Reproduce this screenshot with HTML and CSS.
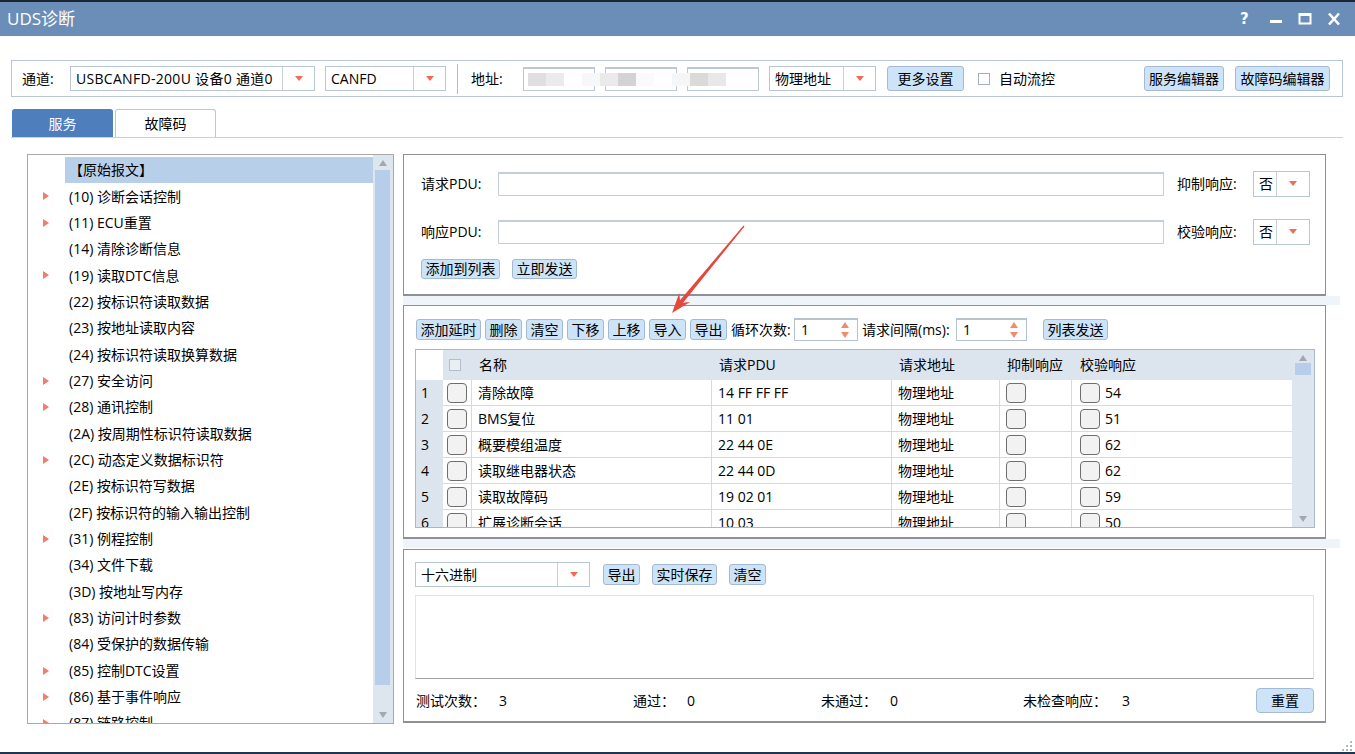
FILE: index.html
```html
<!DOCTYPE html>
<html lang="zh-CN">
<head>
  <meta charset="UTF-8">
  <title>UDS诊断</title>
  <link rel="stylesheet" href="styles.css">
</head>
<body>
<div class="window">
  <!-- title bar -->
  <div class="titlebar">
    <span class="title">UDS诊断</span>
    <div class="title-btns">
      <span class="help">?</span>
      <svg width="14" height="14" viewBox="0 0 14 14"><rect x="1" y="8" width="12" height="3" fill="#fff"/></svg>
      <svg width="14" height="14" viewBox="0 0 14 14"><rect x="1.5" y="2" width="11" height="9.5" fill="none" stroke="#fff" stroke-width="2"/><rect x="1" y="1" width="12" height="3" fill="#fff"/></svg>
      <svg width="14" height="14" viewBox="0 0 14 14"><path d="M2 1.5 L12 12.5 M12 1.5 L2 12.5" stroke="#fff" stroke-width="2.6"/></svg>
    </div>
  </div>

  <div class="content">
    <!-- channel toolbar -->
    <div class="toolbar">
      <span class="lbl lbl-ch">通道:</span>
      <div class="combo combo-ch"><span class="combo-text">USBCANFD-200U 设备0 通道0</span><span class="combo-arrow"></span></div>
      <div class="combo combo-type"><span class="combo-text">CANFD</span><span class="combo-arrow"></span></div>
      <span class="vsep"></span>
      <span class="lbl lbl-addr">地址:</span>
      <span class="addr"></span>
      <span class="addr"></span>
      <span class="addr"></span>
      <div class="combo combo-addr"><span class="combo-text">物理地址</span><span class="combo-arrow"></span></div>
      <button class="btn btn-tb btn-more">更多设置</button>
      <span class="check-sm"></span>
      <span class="lbl lbl-flow">自动流控</span>
      <button class="btn btn-tb btn-svc">服务编辑器</button>
      <button class="btn btn-tb btn-dtc">故障码编辑器</button>
      <div class="mosaic">
        <i style="background:#dfdfdf"></i><i style="background:#ebebeb"></i><i></i><i style="background:#f7f7f8"></i><i style="background:#eaeaea"></i><i style="background:#d3d3d4"></i><i style="background:#fafafa"></i><i></i><i style="background:#f6f6f7"></i><i style="background:#dcdad9"></i><i style="background:#e8e8e8"></i>
      </div>
    </div>

    <!-- tabs -->
    <div class="tabs">
      <div class="tab active">服务</div>
      <div class="tab">故障码</div>
    </div>

    <div class="main">
      <!-- service tree -->
      <div class="tree">
        <ul class="tree-list">
          <li class="sel"><span class="node-text">【原始报文】</span></li>
          <li class="has"><span class="node-text">(10) 诊断会话控制</span></li>
          <li class="has"><span class="node-text">(11) ECU重置</span></li>
          <li><span class="node-text">(14) 清除诊断信息</span></li>
          <li class="has"><span class="node-text">(19) 读取DTC信息</span></li>
          <li><span class="node-text">(22) 按标识符读取数据</span></li>
          <li><span class="node-text">(23) 按地址读取内容</span></li>
          <li><span class="node-text">(24) 按标识符读取换算数据</span></li>
          <li class="has"><span class="node-text">(27) 安全访问</span></li>
          <li class="has"><span class="node-text">(28) 通讯控制</span></li>
          <li><span class="node-text">(2A) 按周期性标识符读取数据</span></li>
          <li class="has"><span class="node-text">(2C) 动态定义数据标识符</span></li>
          <li><span class="node-text">(2E) 按标识符写数据</span></li>
          <li><span class="node-text">(2F) 按标识符的输入输出控制</span></li>
          <li class="has"><span class="node-text">(31) 例程控制</span></li>
          <li><span class="node-text">(34) 文件下载</span></li>
          <li><span class="node-text">(3D) 按地址写内存</span></li>
          <li class="has"><span class="node-text">(83) 访问计时参数</span></li>
          <li><span class="node-text">(84) 受保护的数据传输</span></li>
          <li class="has"><span class="node-text">(85) 控制DTC设置</span></li>
          <li class="has"><span class="node-text">(86) 基于事件响应</span></li>
          <li class="has"><span class="node-text">(87) 链路控制</span></li>
        </ul>
        <div class="vscroll tree-scroll">
          <span class="sb-up"></span>
          <span class="sb-thumb"></span>
          <span class="sb-down"></span>
        </div>
      </div>

      <div class="right">
        <!-- single request -->
        <div class="panel panel-req">
          <div class="pdu-row">
            <span class="lbl lbl-pdu">请求PDU:</span>
            <span class="pdu-input"></span>
            <span class="lbl lbl-opt">抑制响应:</span>
            <div class="combo combo-yn"><span class="combo-text">否</span><span class="combo-arrow"></span></div>
          </div>
          <div class="pdu-row row2">
            <span class="lbl lbl-pdu">响应PDU:</span>
            <span class="pdu-input"></span>
            <span class="lbl lbl-opt">校验响应:</span>
            <div class="combo combo-yn"><span class="combo-text">否</span><span class="combo-arrow"></span></div>
          </div>
          <div class="btn-row">
            <button class="btn">添加到列表</button>
            <button class="btn">立即发送</button>
          </div>
        </div>

        <div class="splitter"></div>

        <!-- request list -->
        <div class="panel panel-list">
          <div class="list-bar">
            <button class="btn">添加延时</button>
            <button class="btn">删除</button>
            <button class="btn">清空</button>
            <button class="btn">下移</button>
            <button class="btn">上移</button>
            <button class="btn">导入</button>
            <button class="btn">导出</button>
            <span class="lbl lbl-loop">循环次数:</span>
            <div class="spin spin-loop"><span>1</span><i class="spin-arrows"></i></div>
            <span class="lbl lbl-gap">请求间隔(ms):</span>
            <div class="spin spin-gap"><span>1</span><i class="spin-arrows"></i></div>
            <button class="btn btn-send">列表发送</button>
          </div>

          <div class="grid">
            <div class="grid-body">
              <div class="grow ghead">
                <span class="c-num"></span>
                <span class="c-chk"><i class="hchk"></i></span>
                <span class="c-name">名称</span>
                <span class="c-pdu">请求PDU</span>
                <span class="c-addr">请求地址</span>
                <span class="c-sup">抑制响应</span>
                <span class="c-ver">校验响应</span>
              </div>
              <div class="grow">
                <span class="c-num">1</span><span class="c-chk"><i class="cbox"></i></span><span class="c-name">清除故障</span><span class="c-pdu">14 FF FF FF</span><span class="c-addr">物理地址</span><span class="c-sup"><i class="cbox"></i></span><span class="c-ver"><i class="cbox"></i>54</span>
              </div>
              <div class="grow">
                <span class="c-num">2</span><span class="c-chk"><i class="cbox"></i></span><span class="c-name">BMS复位</span><span class="c-pdu">11 01</span><span class="c-addr">物理地址</span><span class="c-sup"><i class="cbox"></i></span><span class="c-ver"><i class="cbox"></i>51</span>
              </div>
              <div class="grow">
                <span class="c-num">3</span><span class="c-chk"><i class="cbox"></i></span><span class="c-name">概要模组温度</span><span class="c-pdu">22 44 0E</span><span class="c-addr">物理地址</span><span class="c-sup"><i class="cbox"></i></span><span class="c-ver"><i class="cbox"></i>62</span>
              </div>
              <div class="grow">
                <span class="c-num">4</span><span class="c-chk"><i class="cbox"></i></span><span class="c-name">读取继电器状态</span><span class="c-pdu">22 44 0D</span><span class="c-addr">物理地址</span><span class="c-sup"><i class="cbox"></i></span><span class="c-ver"><i class="cbox"></i>62</span>
              </div>
              <div class="grow">
                <span class="c-num">5</span><span class="c-chk"><i class="cbox"></i></span><span class="c-name">读取故障码</span><span class="c-pdu">19 02 01</span><span class="c-addr">物理地址</span><span class="c-sup"><i class="cbox"></i></span><span class="c-ver"><i class="cbox"></i>59</span>
              </div>
              <div class="grow">
                <span class="c-num">6</span><span class="c-chk"><i class="cbox"></i></span><span class="c-name">扩展诊断会话</span><span class="c-pdu">10 03</span><span class="c-addr">物理地址</span><span class="c-sup"><i class="cbox"></i></span><span class="c-ver"><i class="cbox"></i>50</span>
              </div>
            </div>
            <div class="vscroll grid-scroll">
              <span class="sb-up"></span>
              <span class="sb-thumb"></span>
              <span class="sb-down"></span>
            </div>
          </div>
        </div>

        <div class="splitter"></div>

        <!-- result log -->
        <div class="panel panel-log">
          <div class="log-bar">
            <div class="combo combo-fmt"><span class="combo-text">十六进制</span><span class="combo-arrow"></span></div>
            <button class="btn">导出</button>
            <button class="btn">实时保存</button>
            <button class="btn">清空</button>
          </div>
          <div class="log"></div>
          <div class="stats">
            <span>测试次数：</span><span>3</span>
            <span>通过：</span><span>0</span>
            <span>未通过：</span><span>0</span>
            <span>未检查响应：</span><span>3</span>
            <button class="btn btn-reset">重置</button>
          </div>
        </div>
      </div>
    </div>
  </div>

  <!-- annotation arrow drawn over the screenshot -->
  <svg class="mark" width="1355" height="754" viewBox="0 0 1355 754">
    <polygon fill="#e5483b" points="744.5,226.4 683.1,302.7 690.1,302.1 672,313 679.3,293.1 680.0,300.2 743.5,225.6"/>
  </svg>
  <span class="grip"></span>
</div>
</body>
</html>
```

FILE: styles.css
```css
* {
  box-sizing: border-box;
}
body {
  margin: 0;
  font-family: "Open Sans", "Noto Sans CJK SC", sans-serif;
  font-size: 14px;
  line-height: 18px;
  color: #000;
  background: #fff;
}
ul {
  margin: 0;
  padding: 0;
  list-style: none;
}
i {
  display: block;
}
.window {
  position: relative;
  width: 1355px;
  height: 754px;
  border-top: 2px solid #1c2633;
  border-bottom: 2px solid #1d3550;
  background: #fff;
  overflow: hidden;
  display: flex;
  flex-direction: column;
}

/* title bar */
.titlebar {
  height: 34px;
  flex: none;
  background: #6a8eb8;
  color: #fff;
  display: flex;
  align-items: center;
  padding-left: 7px;
}
.title {
  font-size: 17px;
  line-height: 22px;
}
.title-btns {
  margin-left: auto;
  display: flex;
  align-items: center;
  gap: 15px;
  padding-right: 14px;
}
.help {
  font-family: "DejaVu Sans", sans-serif;
  font-weight: bold;
  font-size: 15px;
  width: 10px;
  margin-right: 4px;
}

.content {
  flex: 1;
  padding: 24px 12px 0 11px;
}

/* top toolbar */
.toolbar {
  position: relative;
  height: 37px;
  border: 1px solid #b9c6d5;
  display: flex;
  align-items: center;
  padding: 0 12px 0 10px;
}
.lbl {
  white-space: nowrap;
  flex: none;
}
.lbl-ch {
  width: 48px;
}
.lbl-addr {
  width: 52px;
  margin-left: 13px;
}
.vsep {
  width: 1px;
  height: 30px;
  background: #b3bcc8;
  margin-left: 11px;
}
.addr {
  width: 72px;
  height: 24px;
  border: 1px solid #bcc8d6;
  border-top-width: 2px;
  margin-right: 10px;
}
.mosaic {
  position: absolute;
  left: 516px;
  top: 12px;
  display: flex;
}
.mosaic i {
  width: 18px;
  height: 13px;
}

.combo {
  display: flex;
  height: 25px;
  border: 1px solid #b9c6d5;
  background: #fff;
  flex: none;
}
.combo-text {
  flex: 1;
  padding-left: 5px;
  line-height: 23px;
  white-space: nowrap;
  overflow: hidden;
}
.combo-ch .combo-text {
  letter-spacing: 0.3px;
}
.combo-arrow {
  width: 32px;
  border-left: 1px solid #c7d1dc;
  position: relative;
}
.combo-arrow::after {
  content: "";
  position: absolute;
  left: 12px;
  top: 9px;
  border-left: 4px solid transparent;
  border-right: 4px solid transparent;
  border-top: 5px solid #f26b53;
}
.combo-ch {
  width: 245px;
}
.combo-type {
  width: 121px;
  margin-left: 10px;
}
.combo-addr {
  width: 107px;
}
.combo-yn {
  width: 57px;
  height: 26px;
}
.combo-yn .combo-arrow {
  width: 33px;
}
.combo-fmt {
  width: 175px;
}

.btn {
  font: inherit;
  color: #000;
  height: 21px;
  line-height: 18px;
  padding: 0 3.5px;
  background: #cde4f8;
  border: 1px solid #a4bad3;
  border-radius: 3px;
  flex: none;
  white-space: nowrap;
}
.btn-tb {
  height: 25px;
  padding: 0 4px;
}
.btn-more {
  width: 77px;
  margin-left: 11px;
}
.btn-svc {
  margin-left: auto;
  width: 80px;
}
.btn-dtc {
  margin-left: 11px;
  width: 95px;
}
.check-sm {
  width: 12px;
  height: 12px;
  border: 1px solid #a3afbe;
  margin-left: 14px;
  flex: none;
}
.lbl-flow {
  margin-left: 9px;
}

/* tabs */
.tabs {
  margin-top: 12px;
  height: 29px;
  display: flex;
  gap: 2px;
  padding-left: 1px;
  border-bottom: 1px solid #c5d3e2;
}
.tab {
  width: 101px;
  height: 28px;
  display: flex;
  align-items: center;
  justify-content: center;
  border: 1px solid #b9c7d6;
  border-bottom: none;
  border-radius: 3px 3px 0 0;
  background: #fff;
}
.tab.active {
  background: #4f7ebd;
  border-color: #4f7ebd;
  color: #fff;
}

/* main area */
.main {
  display: flex;
  padding: 16px 0 0 16px;
}
.tree {
  width: 367px;
  height: 570px;
  border: 1px solid #a9a9a9;
  display: flex;
  flex: none;
  overflow: hidden;
}
.tree-list {
  flex: 1;
  padding-top: 2px;
}
.tree-list li {
  height: 26.35px;
  display: flex;
  align-items: center;
  padding-left: 37px;
  position: relative;
}
.tree-list li.has::before {
  content: "";
  position: absolute;
  left: 15px;
  top: 9px;
  border-top: 4px solid transparent;
  border-bottom: 4px solid transparent;
  border-left: 6px solid #f47c6a;
}
.node-text {
  padding-left: 4px;
  white-space: nowrap;
}
.tree-list li.sel .node-text {
  background: #b8cfea;
  width: 100%;
  height: 26px;
  line-height: 26px;
}

.vscroll {
  background: #dde5ee;
  position: relative;
  flex: none;
}
.tree-scroll {
  width: 20px;
}
.sb-up, .sb-down {
  position: absolute;
  left: 50%;
  margin-left: -4px;
  border-left: 4px solid transparent;
  border-right: 4px solid transparent;
}
.sb-up {
  top: 5px;
  border-bottom: 6px solid #a3a8ae;
}
.sb-down {
  bottom: 5px;
  border-top: 6px solid #a3a8ae;
}
.sb-thumb {
  position: absolute;
  background: #b7cdea;
}
.tree-scroll .sb-thumb {
  left: 2px;
  right: 3px;
  top: 15px;
  height: 515px;
}

.right {
  width: 937px;
  margin-left: 9px;
  flex: none;
}
.splitter {
  height: 9px;
  background: #eef4f9;
}
.splitter + .panel-log {
  margin-top: 1px;
}
.panel {
  width: 923px;
  border: 1px solid #8d9196;
  border-bottom-width: 2px;
  background: #fff;
}

/* request panel */
.panel-req {
  height: 142px;
  padding: 16px 15px 0 17px;
}
.pdu-row {
  display: flex;
  align-items: center;
  height: 26px;
}
.row2 {
  margin-top: 22px;
}
.lbl-pdu {
  width: 77px;
}
.pdu-input {
  flex: 1;
  height: 24px;
  border: 1px solid #c3cedb;
  border-top-width: 2px;
}
.lbl-opt {
  width: 76px;
  margin-left: 13px;
}
.btn-row {
  display: flex;
  gap: 12px;
  margin-top: 14px;
}
.btn-row .btn {
  height: 20px;
}

/* list panel */
.panel-list {
  height: 234px;
  padding: 12px 10px 0 11px;
}
.list-bar {
  display: flex;
  align-items: center;
  height: 23px;
  gap: 4px;
  padding-left: 1px;
}
.spin {
  height: 23px;
  border: 1px solid #b4c2d2;
  border-top-width: 2px;
  position: relative;
  padding-left: 6px;
  line-height: 19px;
  flex: none;
}
.spin-loop {
  width: 64px;
}
.spin-gap {
  width: 71px;
}
.lbl-loop {
  width: 59px;
}
.lbl-gap {
  width: 90px;
}
.spin-arrows {
  position: absolute;
  right: 8px;
  top: 2px;
  width: 8px;
  height: 16px;
}
.spin-arrows::before, .spin-arrows::after {
  content: "";
  position: absolute;
  left: 0;
  border-left: 4px solid transparent;
  border-right: 4px solid transparent;
}
.spin-arrows::before {
  top: 0;
  border-bottom: 6px solid #f08a70;
}
.spin-arrows::after {
  bottom: 0;
  border-top: 6px solid #f08a70;
}
.btn-send {
  margin-left: 12px;
}

.grid {
  margin-top: 8px;
  width: 900px;
  height: 179px;
  border: 1px solid #a9b8c8;
  display: flex;
  overflow: hidden;
}
.grid-body {
  width: 876px;
  flex: none;
}
.grow {
  display: flex;
  height: 26px;
}
.grow > span {
  display: flex;
  align-items: center;
  flex: none;
  white-space: nowrap;
  border-bottom: 1px solid #d9d9d9;
  border-right: 1px solid #d9d9d9;
  padding-left: 6px;
}
.grow .c-num {
  width: 27px;
  background: #dce4ee;
  border: none;
  padding-left: 5px;
}
.grow .c-chk {
  width: 29px;
  padding-left: 4px;
}
.c-name {
  width: 240px;
}
.c-pdu {
  width: 180px;
}
.c-addr {
  width: 108px;
}
.c-sup {
  width: 72px;
}
.c-ver {
  width: 220px;
}
.grow .c-ver {
  padding-left: 8px;
  gap: 5px;
  border-right: none;
}
.ghead {
  height: 30px;
  background: #dce4ee;
}
.ghead > span {
  border: none;
  padding-left: 7px;
}
.ghead .c-num {
  background: #fff;
}
.ghead .c-chk {
  padding-left: 6px;
}
.hchk {
  width: 12px;
  height: 12px;
  border: 1px solid #b3bfcc;
  background: #e9eef4;
}
.cbox {
  width: 20px;
  height: 20px;
  border: 1px solid #6e6e6e;
  border-radius: 4px;
  background: #f2f2f2;
  flex: none;
}
.grid-scroll {
  flex: 1;
}
.grid-scroll .sb-thumb {
  left: 3px;
  right: 3px;
  top: 13px;
  height: 12px;
}

/* log panel */
.panel-log {
  height: 174px;
  padding: 12px 11px 0 11px;
}
.log-bar {
  display: flex;
  align-items: center;
  gap: 12px;
}
.log-bar .combo {
  margin-right: 1px;
}
.log {
  margin-top: 8px;
  width: 899px;
  height: 84px;
  border: 1px solid #e3e3e3;
  border-bottom-color: #a0a0a0;
}
.stats {
  margin-top: 9px;
  display: grid;
  grid-template-columns: 83px 134px 54px 134px 69px 133px 99px 1fr 58px;
  align-items: center;
  padding-left: 1px;
  width: 899px;
}
.btn-reset {
  height: 25px;
  border-radius: 4px;
}

/* overlays */
.mark {
  position: absolute;
  left: 0;
  top: -2px;
  pointer-events: none;
}
.grip {
  position: absolute;
  right: 3px;
  bottom: 1px;
  width: 11px;
  height: 11px;
  background-image: radial-gradient(#a9b2bc 1px, transparent 1.2px);
  background-size: 4px 4px;
  clip-path: polygon(100% 0, 100% 100%, 0 100%);
}
```
